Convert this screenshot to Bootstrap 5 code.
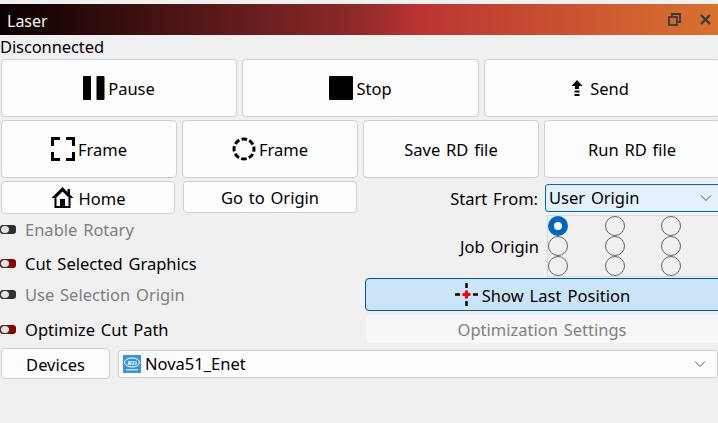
<!DOCTYPE html>
<html lang="en">
<head>
    <meta charset="UTF-8">
    <meta name="viewport" content="width=device-width, initial-scale=1.0">
    <title>Laser</title>
    <link href="https://cdn.jsdelivr.net/npm/bootstrap@5.3.0/dist/css/bootstrap.min.css" rel="stylesheet">
    <style>
        html, body { height: 100%; overflow: hidden; }
        body { background: #f0f0f0; color: #000; font-family: "Noto Sans", "Open Sans", sans-serif; font-size: 16.5px; line-height: 22px; word-spacing: 1.5px; padding-top: 4px; }
        .laser-title { height: 31px; width: 718px; padding: 0 7px; color: #f4f4f4; font-size: 16px; background: linear-gradient(to right, #0a0000 0%, #8f2a2a 50%, #bb3333 58%, #d8722f 100%); }
        .title-text { padding-top: 2px; }
        .win-btns { gap: 19px; }
        .laser-status { height: 24px; padding-top: 1px; letter-spacing: -.1px; }
        .laser-pane { width: 724px; padding-left: 1px; }
        .tool-btn { --bs-btn-font-size: 16.5px; --bs-btn-line-height: 22px; --bs-btn-color: #000; --bs-btn-bg: #fdfdfd; --bs-btn-border-color: #d0d0d0; --bs-btn-border-radius: 4px; --bs-btn-padding-x: 0; --bs-btn-padding-y: 0; --bs-btn-hover-bg: #fdfdfd; --bs-btn-hover-color: #000; --bs-btn-hover-border-color: #d0d0d0; display: flex; align-items: center; justify-content: center; gap: 3px; word-spacing: inherit; padding-top: 2px; }
        .tool-btn svg { margin-top: -2px; }
        .row-big { display: grid; grid-template-columns: 236px 237px 236px; column-gap: 5px; height: 58px; }
        .row-mid { display: grid; grid-template-columns: repeat(4, 176px); column-gap: 5px; height: 58px; margin-top: 3px; }
        .lower-grid { display: grid; grid-template-columns: 362px 361px; margin-top: 3px; }
        .home-row { display: grid; grid-template-columns: 174px 174px; column-gap: 8px; height: 33px; }
        .home-row .tool-btn { height: 33px; gap: 5px; }
        .home-row .tool-btn + .tool-btn { height: 32px; }
        .opt-check { display: flex; align-items: center; gap: 9px; position: absolute; left: -1px; }
        .left-pane { position: relative; height: 168px; }
        .opt-1 { top: 38px; }
        .opt-2 { top: 72px; }
        .opt-3 { top: 103px; }
        .opt-4 { top: 138px; }
        .is-muted { color: #7f7f7f; }
        .led { display: block; position: relative; width: 16px; height: 9px; border-radius: 3px; background: #2f2f2f; margin-top: -1px; }
        .led::before { content: ""; position: absolute; left: 0; top: 0; width: 10px; height: 9px; border-radius: 50%; background: #e4e4e4; border: 1.5px solid #333; }
        .led-on { background: #8e0000; }
        .start-row { height: 30px; margin-top: 2px; }
        .start-label { width: 182px; flex: none; text-align: right; padding-right: 7px; padding-top: 2px; }
        .laser-select.form-select { font-size: 16.5px; line-height: 22px; word-spacing: inherit; color: #000; border-radius: 3px; padding: 0 0 0 3px; height: 28px; box-shadow: none; background-color: #fdfdfd; border: 1px solid #d0d0d0; background-position: right 11px center; background-size: 12px 8px; background-image: url("data:image/svg+xml,%3csvg xmlns='http://www.w3.org/2000/svg' viewBox='0 0 12 8'%3e%3cpath fill='none' stroke='%23555' d='M1 1.500l5 5 5-5'/%3e%3c/svg%3e"); }
        .select-focus.form-select { background-color: #e4f0fa; border-color: #0067c0; width: 179px; flex: none; }
        .job-row { height: 62px; margin-top: 2px; }
        .job-label { width: 184px; flex: none; text-align: right; padding-right: 8px; padding-top: 21px; }
        .origin-grid { width: 177px; margin-top: 0; border: 1px solid #d9d9d9; border-right: 0; display: grid; grid-template-columns: repeat(3, 20px); column-gap: 36.500px; grid-auto-rows: 20px; padding-left: 0; align-content: start; }
        .origin-grid .form-check-input { width: 20px; height: 20px; margin: 0; background: #f0f0f0; border: 1px solid #666; box-shadow: none; }
        .origin-grid .form-check-input:checked { background: #fff; border: 6px solid #0067c0; }
        .last-btn.tool-btn { --bs-btn-bg: #cce4f7; --bs-btn-border-color: #005499; --bs-btn-hover-bg: #cce4f7; --bs-btn-hover-border-color: #005499; height: 33px; width: 358px; margin-top: 1px; margin-left: 2px; gap: 4px; padding-right: 3px; letter-spacing: .05px; }
        .settings-btn.tool-btn { --bs-btn-bg: #f7f7f7; --bs-btn-border-color: #f0f0f0; --bs-btn-disabled-bg: #f7f7f7; --bs-btn-disabled-border-color: #f0f0f0; --bs-btn-disabled-color: #7f7f7f; --bs-btn-disabled-opacity: 1; height: 30px; width: 358px; margin-top: 3px; margin-left: 2px; padding-right: 4px; }
        .device-row { display: flex; gap: 8px; width: 724px; margin-top: -1px; align-items: center; }
        .device-btn.tool-btn { width: 109px; height: 31px; flex: none; }
        .device-box { position: relative; width: 600px; flex: none; }
        .device-box .form-select { padding-left: 26px; width: 600px; }
        .rd-logo { position: absolute; left: 5px; top: 5px; width: 18px; height: 18px; }
    </style>
</head>
<body>
    <header class="laser-title d-flex align-items-center justify-content-between">
        <span class="title-text">Laser</span>
        <div class="win-btns d-flex align-items-center">
            <svg width="13" height="13" viewBox="0 0 13 13" fill="none" stroke="#3a3a3a" stroke-width="1.800"><rect x="1" y="4" width="8" height="8"/><path d="M4 3.500V1h8v8H9.500"/></svg>
            <svg width="11" height="11" viewBox="0 0 11 11" fill="none" stroke="#3a3a3a" stroke-width="2.400"><path d="M1 1l9 9M10 1l-9 9"/></svg>
        </div>
    </header>

    <div class="laser-status">Disconnected</div>

    <main class="laser-pane">
        <div class="row-big">
            <button class="btn tool-btn">
                <svg width="22" height="24" viewBox="0 0 22 24"><rect width="8" height="24" rx="1"/><rect x="13.500" width="8" height="24" rx="1"/></svg>
                Pause
            </button>
            <button class="btn tool-btn">
                <svg width="24" height="24" viewBox="0 0 24 24"><rect width="24" height="24" rx="1"/></svg>
                Stop
            </button>
            <button class="btn tool-btn pe-1">
                <svg width="12" height="17" viewBox="0 0 12 17" class="me-1"><path d="M6 0l5.500 6H8v3H4V6H.5z"/><rect x="3.500" y="10.500" width="5" height="2"/><rect x="3.500" y="14" width="5" height="2"/></svg>
                Send
            </button>
        </div>

        <div class="row-mid">
            <button class="btn tool-btn">
                <svg width="24" height="24" viewBox="0 0 24 24" fill="none" stroke="#000" stroke-width="3"><path d="M1.500 9V1.500H9M15 1.500h7.500V9M22.500 15v7.500H15M9 22.500H1.500V15"/></svg>
                Frame
            </button>
            <button class="btn tool-btn">
                <svg width="24" height="24" viewBox="0 0 24 24" fill="none" stroke="#000" stroke-width="3"><circle cx="12" cy="12" r="10" stroke-dasharray="5.500 2.354" stroke-dashoffset="2.750"/></svg>
                Frame
            </button>
            <button class="btn tool-btn">Save RD file</button>
            <button class="btn tool-btn">Run RD file</button>
        </div>

        <div class="lower-grid">
            <div class="left-pane">
                <div class="home-row">
                    <button class="btn tool-btn">
                        <svg width="23" height="21" viewBox="0 0 22 21"><path d="M11 0L0 11h3v10h16V11h3l-3.500-3.500V2H16v3z"/><path fill="#fdfdfd" d="M11 4.500l-6 6V19h12v-8.500z"/><rect x="8.500" y="12" width="5" height="8"/></svg>
                        Home
                    </button>
                    <button class="btn tool-btn">Go to Origin</button>
                </div>
                <label class="opt-check opt-1 is-muted"><span class="led"></span>Enable Rotary</label>
                <label class="opt-check opt-2"><span class="led led-on"></span>Cut Selected Graphics</label>
                <label class="opt-check opt-3 is-muted"><span class="led"></span>Use Selection Origin</label>
                <label class="opt-check opt-4"><span class="led led-on"></span>Optimize Cut Path</label>
            </div>

            <div>
                <div class="start-row d-flex align-items-center">
                    <span class="start-label">Start From:</span>
                    <select class="form-select laser-select select-focus"><option>User Origin</option></select>
                </div>
                <div class="job-row d-flex">
                    <span class="job-label">Job Origin</span>
                    <div class="origin-grid">
                        <input class="form-check-input" type="radio" name="origin" checked>
                        <input class="form-check-input" type="radio" name="origin">
                        <input class="form-check-input" type="radio" name="origin">
                        <input class="form-check-input" type="radio" name="origin">
                        <input class="form-check-input" type="radio" name="origin">
                        <input class="form-check-input" type="radio" name="origin">
                        <input class="form-check-input" type="radio" name="origin">
                        <input class="form-check-input" type="radio" name="origin">
                        <input class="form-check-input" type="radio" name="origin">
                    </div>
                </div>
                <button class="btn tool-btn last-btn">
                    <svg width="23" height="23" viewBox="0 0 23 23"><path d="M0 10.250h5v2.500H0zM18 10.250h5v2.500h-5zM10.250 0h2.500v5h-2.500zM10.250 18h2.500v5h-2.500z"/><path fill="#f00" d="M10 7.500h3V10h2.500v3H13v2.500h-3V13H7.500v-3H10z"/></svg>
                    Show Last Position
                </button>
                <button class="btn tool-btn settings-btn" disabled>Optimization Settings</button>
            </div>
        </div>

        <div class="device-row">
            <button class="btn tool-btn device-btn">Devices</button>
            <div class="device-box">
                <select class="form-select laser-select"><option>Nova51_Enet</option></select>
                <svg class="rd-logo" viewBox="0 0 18 18">
                    <rect width="18" height="18" fill="#3a94dc"/>
                    <ellipse cx="9" cy="7.500" rx="7.500" ry="4.500" fill="none" stroke="#fff" stroke-width="1"/>
                    <text x="9" y="10" font-size="7" font-weight="700" font-style="italic" font-family="Liberation Serif" fill="#fff" text-anchor="middle" word-spacing="0">RD</text>
                    <rect x="3" y="14" width="12" height="1.500" fill="#bcdcf4"/>
                </svg>
            </div>
        </div>
    </main>

    <script src="https://cdn.jsdelivr.net/npm/bootstrap@5.3.0/dist/js/bootstrap.bundle.min.js"></script>
</body>
</html>
